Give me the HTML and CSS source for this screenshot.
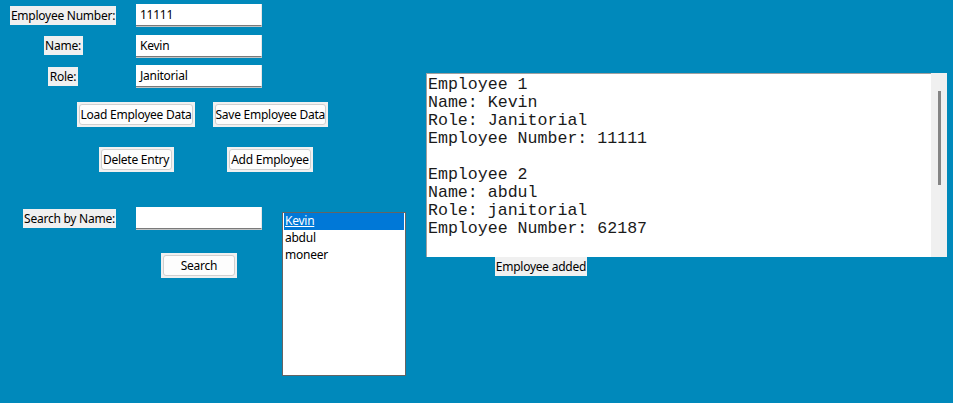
FILE: index.html
```html
<!DOCTYPE html>
<html>
<head>
<meta charset="utf-8">
<link rel="stylesheet" href="styles.css">
</head>
<body>
<div class="app">
  <div class="left">
    <div class="form">
      <span class="lbl lbl-num">Employee Number:</span><div class="entry">11111</div>
      <span class="lbl lbl-name">Name:</span><div class="entry">Kevin</div>
      <span class="lbl lbl-role">Role:</span><div class="entry">Janitorial</div>
    </div>
    <div class="btns">
      <span class="bwrap b-load"><span class="btn">Load Employee Data</span></span>
      <span class="bwrap b-save"><span class="btn">Save Employee Data</span></span>
      <span class="bwrap b-del"><span class="btn">Delete Entry</span></span>
      <span class="bwrap b-add"><span class="btn">Add Employee</span></span>
    </div>
    <div class="bottom">
      <div class="search">
        <div class="form">
          <span class="lbl lbl-search">Search by Name:</span><div class="entry"></div>
        </div>
        <span class="bwrap b-search"><span class="btn">Search</span></span>
      </div>
      <div class="listbox">
        <div class="item sel">Kevin</div>
        <div class="item">abdul</div>
        <div class="item">moneer</div>
      </div>
    </div>
  </div>
  <div class="right">
    <div class="textbox">
      <pre class="text">Employee 1
Name: Kevin
Role: Janitorial
Employee Number: 11111

Employee 2
Name: abdul
Role: janitorial
Employee Number: 62187</pre>
      <div class="scroll"><div class="thumb"></div></div>
    </div>
    <span class="status">Employee added</span>
  </div>
</div>
</body>
</html>
```
FILE: styles.css
```css
html, body {
  margin: 0;
  padding: 0;
}
body {
  background: #0089bb;
  width: 953px;
  height: 403px;
  overflow: hidden;
  font-family: "Noto Sans", "Open Sans", sans-serif;
  font-size: 12px;
  letter-spacing: -0.25px;
  color: #000;
}
.app {
  display: flex;
  align-items: flex-start;
}
.left {
  width: 426px;
  flex: none;
  padding-top: 4px;
}
.form {
  display: grid;
  grid-template-columns: 126px 126px;
  column-gap: 10px;
  grid-auto-rows: 22px;
  row-gap: 8.5px;
}
.lbl {
  justify-self: center;
  align-self: center;
  height: 19px;
  line-height: 19px;
  background: #f0f0f0;
  white-space: nowrap;
  text-align: center;
}
.lbl-num { width: 106px; }
.lbl-name { width: 39px; }
.lbl-role { width: 30px; }
.lbl-search {
  width: 93px;
  justify-self: end;
  margin-right: 10px;
}
.entry {
  background: #fff;
  height: 22px;
  box-sizing: border-box;
  border-right: 1px solid #e6e6e6;
  border-bottom: 1px solid #7a7a7a;
  box-shadow: 0 1px 0 #c4c4c4;
  line-height: 21px;
  padding-left: 4px;
}
.btns {
  display: grid;
  grid-template-columns: 134px 134px;
  grid-auto-rows: 25px;
  row-gap: 20px;
  margin-top: 15px;
  margin-left: 69px;
}
.bwrap {
  justify-self: center;
  display: flex;
  background: #f0f0f0;
  padding: 2px;
  height: 25px;
  box-sizing: border-box;
}
.b-load { width: 118px; }
.b-save { width: 115px; }
.b-del { width: 75px; }
.b-add { width: 86px; }
.btn {
  flex: 1;
  display: block;
  background: #fdfdfd;
  border: 1px solid #d0d0d0;
  border-radius: 3px;
  line-height: 19px;
  white-space: nowrap;
  text-align: center;
}
.bottom {
  display: flex;
  align-items: flex-start;
  margin-top: 35px;
}
.search {
  width: 282px;
  flex: none;
}
.b-search {
  justify-self: start;
  margin-top: 24px;
  margin-left: 161px;
  width: 76px;
}
.listbox {
  margin-top: 5px;
  width: 124px;
  height: 164px;
  box-sizing: border-box;
  background: #fff;
  border: 1px solid #646464;
  padding-left: 1px;
}
.item {
  height: 16.5px;
  line-height: 16px;
  padding-left: 1px;
  white-space: nowrap;
}
.item.sel {
  background: #0078d7;
  color: #fff;
  text-decoration: underline;
  margin-right: 1px;
  height: 17px;
}
.right {
  margin-top: 73px;
  width: 521px;
  flex: none;
}
.textbox {
  display: flex;
  height: 184px;
}
.text {
  flex: 1;
  margin: 0;
  background: #fff;
  border-top: 1px solid #a0a0a0;
  border-left: 1px solid #a0a0a0;
  padding: 2px 0 0 1px;
  font-family: "Liberation Mono", "Courier New", monospace;
  font-size: 16.6px;
  line-height: 18px;
  letter-spacing: 0;
  color: #1a1a1a;
  overflow: hidden;
}
.scroll {
  width: 16px;
  flex: none;
  background: #f0f0f0;
  display: flex;
  justify-content: center;
  padding-top: 18px;
  box-sizing: border-box;
}
.thumb {
  width: 3px;
  height: 94px;
  background: #858585;
}
.status {
  display: inline-block;
  margin-left: 69px;
  width: 92px;
  text-align: center;
  background: #f0f0f0;
  height: 19px;
  line-height: 19px;
}
```
